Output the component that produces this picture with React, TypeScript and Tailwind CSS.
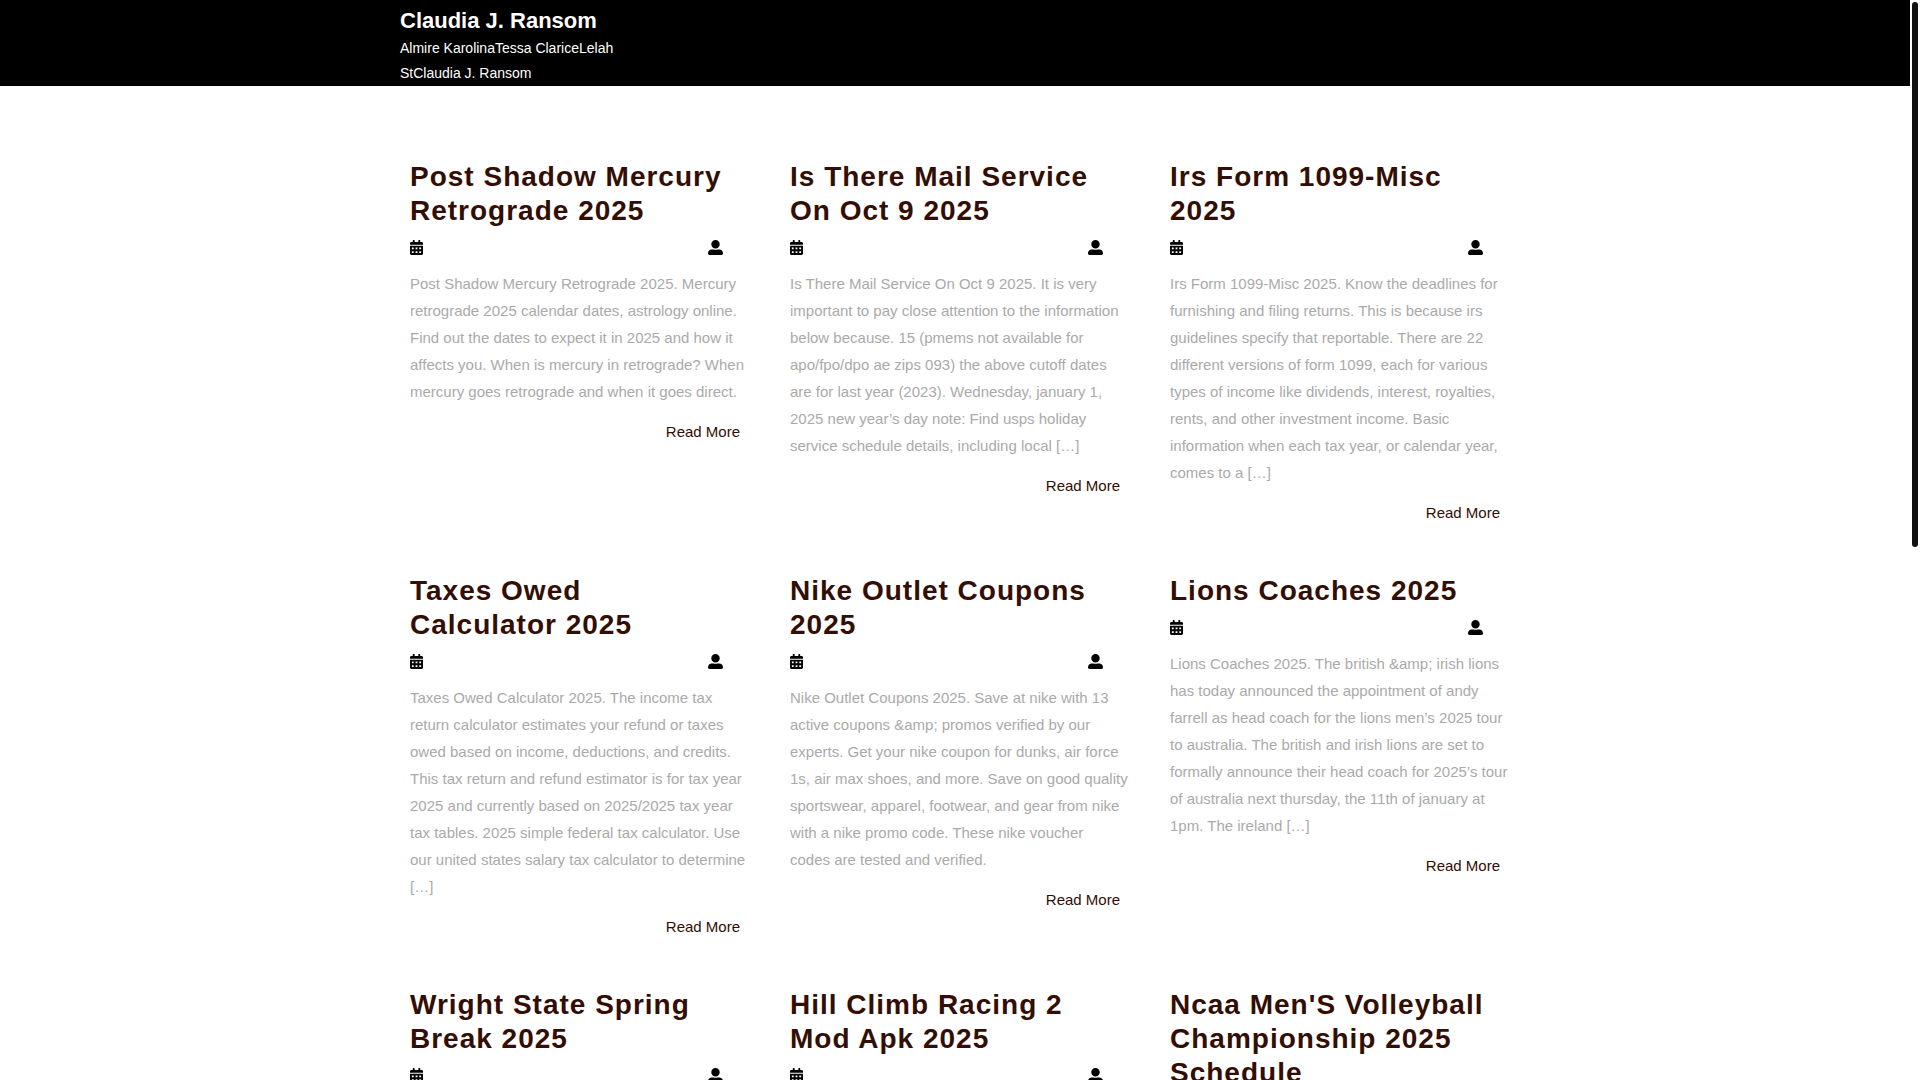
import React from "react";
import { FaCalendarAlt, FaUserAlt } from "react-icons/fa";

type Post = {
  title: string;
  text: string;
};

const posts: Post[] = [
  {
    title: "Post Shadow Mercury Retrograde 2025",
    text: "Post Shadow Mercury Retrograde 2025. Mercury retrograde 2025 calendar dates, astrology online. Find out the dates to expect it in 2025 and how it affects you. When is mercury in retrograde? When mercury goes retrograde and when it goes direct.",
  },
  {
    title: "Is There Mail Service On Oct 9 2025",
    text: "Is There Mail Service On Oct 9 2025. It is very important to pay close attention to the information below because. 15 (pmems not available for apo/fpo/dpo ae zips 093) the above cutoff dates are for last year (2023). Wednesday, january 1, 2025 new year’s day note: Find usps holiday service schedule details, including local […]",
  },
  {
    title: "Irs Form 1099-Misc 2025",
    text: "Irs Form 1099-Misc 2025. Know the deadlines for furnishing and filing returns. This is because irs guidelines specify that reportable. There are 22 different versions of form 1099, each for various types of income like dividends, interest, royalties, rents, and other investment income. Basic information when each tax year, or calendar year, comes to a […]",
  },
  {
    title: "Taxes Owed Calculator 2025",
    text: "Taxes Owed Calculator 2025. The income tax return calculator estimates your refund or taxes owed based on income, deductions, and credits. This tax return and refund estimator is for tax year 2025 and currently based on 2025/2025 tax year tax tables. 2025 simple federal tax calculator. Use our united states salary tax calculator to determine […]",
  },
  {
    title: "Nike Outlet Coupons 2025",
    text: "Nike Outlet Coupons 2025. Save at nike with 13 active coupons &amp; promos verified by our experts. Get your nike coupon for dunks, air force 1s, air max shoes, and more. Save on good quality sportswear, apparel, footwear, and gear from nike with a nike promo code. These nike voucher codes\u00a0are tested and verified.",
  },
  {
    title: "Lions Coaches 2025",
    text: "Lions Coaches 2025. The british &amp; irish lions has today announced the appointment of andy farrell as head coach for the lions men’s 2025 tour to australia. The british and irish lions are set to formally announce their head coach for 2025’s tour of australia next thursday, the 11th of january at 1pm. The ireland […]",
  },
  { title: "Wright State Spring Break 2025", text: "" },
  { title: "Hill Climb Racing 2 Mod Apk 2025", text: "" },
  { title: "Ncaa Men'S Volleyball Championship 2025 Schedule", text: "" },
];

const PostCard = ({ post }: { post: Post }) => {
  return (
    <article className="px-[10px] pt-[10px]">
      <h2 className="pr-1 text-[28px] leading-[34px] font-bold tracking-[1px] text-[#330e04]">
        <a href="#">{post.title}</a>
      </h2>
      <div className="mt-3 flex h-6 justify-between pr-[17px] text-black">
        <FaCalendarAlt className="h-[15px] w-[13px]" />
        <FaUserAlt className="size-[15px]" />
      </div>
      {post.text && (
        <>
          <p className="mt-[6px] -mr-2 text-[15px] leading-[27px] text-[#aaa]">
            {post.text}
          </p>
          <div className="mt-[13px] text-right text-[15px] leading-[27px] text-[#330e04]">
            <a href="#">Read More</a>
          </div>
        </>
      )}
    </article>
  );
};

const App = () => {
  return (
    <div className="relative h-screen overflow-hidden bg-white pr-[10px] font-['Liberation_Sans',Arial,sans-serif]">
      <header className="bg-black text-white">
        <div className="mx-auto max-w-[1110px] pt-[5px]">
          <h1 className="text-[22px] leading-[31px] font-bold">
            <a href="#">Claudia J. Ransom</a>
          </h1>
          <p className="w-[230px] text-[14px] leading-[25px]">
            Almire KarolinaTessa ClariceLelah StClaudia J. Ransom
          </p>
        </div>
      </header>
      <main className="mx-auto grid max-w-[1110px] grid-cols-3 gap-x-[30px] gap-y-[38px] pt-[64px]">
        {posts.map((post) => (
          <PostCard key={post.title} post={post} />
        ))}
      </main>
      {/* page scrollbar */}
      <div className="absolute inset-y-0 right-0 w-[10px] bg-white">
        <div className="mx-auto mt-[2px] h-[545px] w-[6px] rounded-full bg-[#111]" />
      </div>
    </div>
  );
};

export default App;
